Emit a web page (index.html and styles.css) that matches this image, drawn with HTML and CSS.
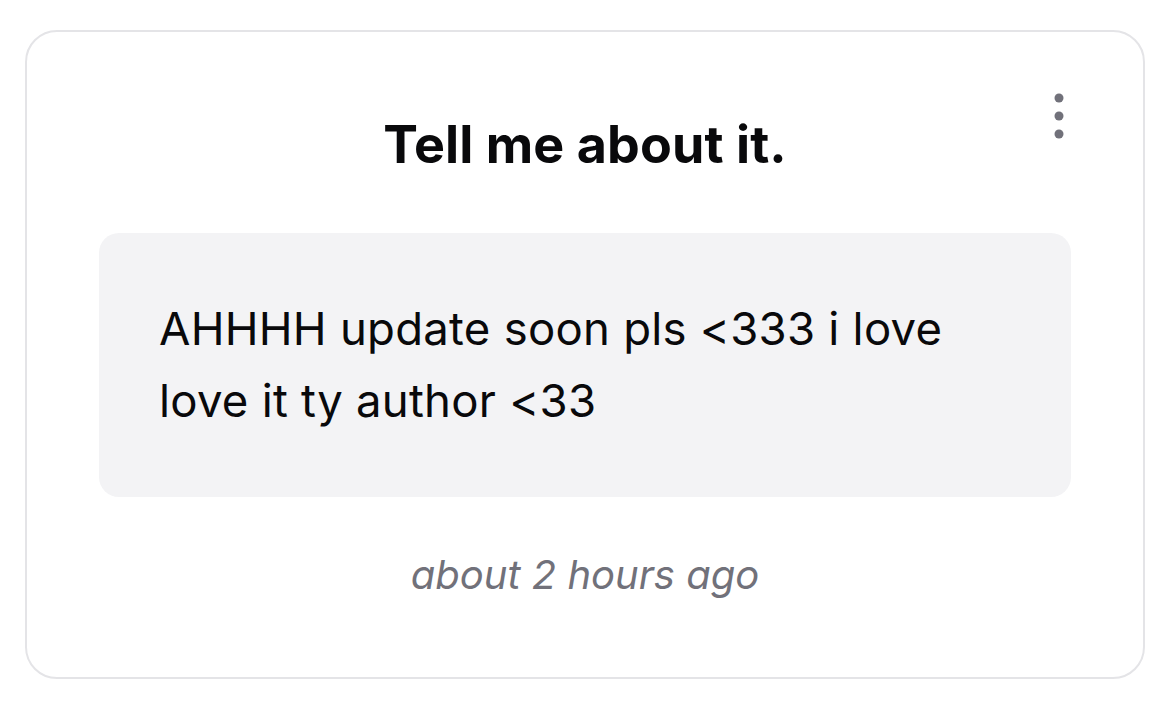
FILE: index.html
```html
<!DOCTYPE html>
<html lang="en">
<head>
    <meta charset="UTF-8">
    <meta name="viewport" content="width=device-width, initial-scale=1.0">
    <title>Tell me about it.</title>
    <link rel="stylesheet" href="styles.css">
</head>
<body>

    <section class="answer-card">
        <button class="more-button" aria-label="More options">
            <svg width="12" height="48" viewBox="0 0 12 48">
                <circle cx="6" cy="6" r="4.5" fill="#71717a"/>
                <circle cx="6" cy="24" r="4.5" fill="#71717a"/>
                <circle cx="6" cy="42" r="4.5" fill="#71717a"/>
            </svg>
        </button>

        <h1 class="question">Tell me about it.</h1>

        <div class="answer-box">
            <p>AHHHH update soon pls &lt;333 i love love it ty author &lt;33</p>
        </div>

        <p class="timestamp">about 2 hours ago</p>
    </section>

</body>
</html>
```

FILE: styles.css
```css
/* Basic Styles */
* {
    box-sizing: border-box;
}

body {
    margin: 0;
    font-family: Inter, "Noto Sans", Arial, sans-serif;
    background-color: #fff;
    padding: 30px 25px 24px 25px;
}

.answer-card {
    position: relative;
    background-color: #fff;
    border: 2px solid #e4e4e7;
    border-radius: 32px;
    padding: 0 72px;
    height: 649px;
    display: flex;
    flex-direction: column;
    align-items: center;
}

.more-button {
    position: absolute;
    top: 60px;
    right: 78px;
    background: none;
    border: none;
    padding: 0;
    cursor: pointer;
    display: flex;
}

.question {
    margin: 82px 0 0 0;
    font-size: 52px;
    font-weight: 700;
    line-height: 62px;
    color: #09090b;
    letter-spacing: 0.1px;
}

.answer-box {
    align-self: stretch;
    margin-top: 57px;
    background-color: #f3f3f5;
    border-radius: 20px;
    padding: 60px;
}

.answer-box p {
    margin: 0;
    font-size: 45.5px;
    line-height: 72px;
    color: #09090b;
    letter-spacing: 0.25px;
}

.timestamp {
    margin: 54px 0 0 0;
    font-size: 40px;
    line-height: 48px;
    font-style: italic;
    color: #71717a;
}
```
